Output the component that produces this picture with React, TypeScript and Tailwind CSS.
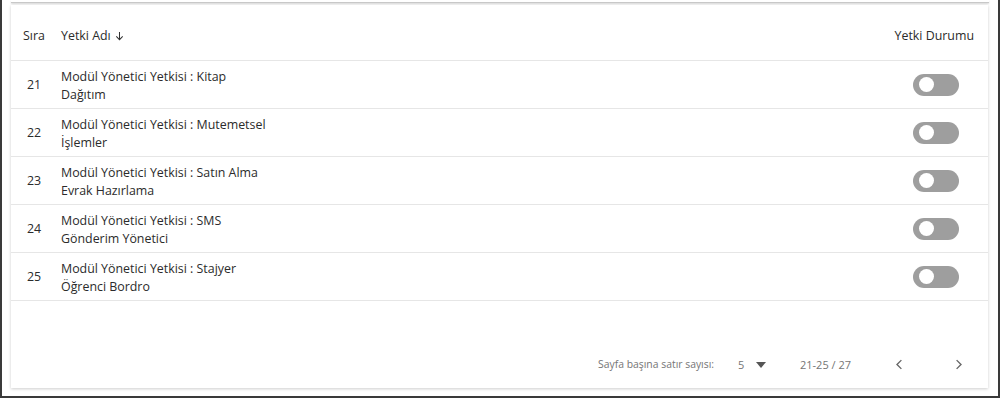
import React from "react";

const rows = [
  { n: 21, a: "Modül Yönetici Yetkisi : Kitap", b: "Dağıtım" },
  { n: 22, a: "Modül Yönetici Yetkisi : Mutemetsel", b: "İşlemler" },
  { n: 23, a: "Modül Yönetici Yetkisi : Satın Alma", b: "Evrak Hazırlama" },
  { n: 24, a: "Modül Yönetici Yetkisi : SMS", b: "Gönderim Yönetici" },
  { n: 25, a: "Modül Yönetici Yetkisi : Stajyer", b: "Öğrenci Bordro" },
];

function Toggle() {
  return (
    <div className="w-[46px] h-[22px] rounded-full bg-[#9e9e9e] flex items-center pl-[6px]">
      <div className="w-[15px] h-[15px] rounded-full bg-white" />
    </div>
  );
}

export default function App() {
  return (
    <div
      className="w-[1000px] h-[398px] bg-white border-l-2 border-r-2 border-b-2 border-[#3a3a3a] overflow-hidden"
      style={{ fontFamily: '"Open Sans", "Noto Sans", sans-serif' }}
    >
      <div className="h-[3px] mx-[9px] border-b border-[#c8c8c8] shadow-[0_1px_2px_rgba(0,0,0,0.15)]" />
      <div className="ml-[9px] mr-[10px] mt-[2px] h-[383px] bg-white shadow-[0_1px_3px_rgba(0,0,0,0.2)] flex flex-col">
        <div className="h-[56px] flex items-end pb-[14px] border-b border-[#e6e6e6] text-[12.4px] text-[#2b2b2b]">
          <div className="w-[50px] pl-[12px]">Sıra</div>
          <div className="flex-1 flex items-center gap-[3px]">
            Yetki Adı
            <svg width="11" height="12" viewBox="0 0 24 24" className="mt-[-2px]">
              <path d="M12 3v17M5 13l7 7 7-7" fill="none" stroke="#333" strokeWidth="2.2" />
            </svg>
          </div>
          <div className="pr-[14px]">Yetki Durumu</div>
        </div>
        {rows.map((r) => (
          <div key={r.n} className="h-[48px] pt-[2px] flex items-center border-b border-[#e6e6e6] text-[12.4px] text-[#2b2b2b]">
            <div className="w-[50px] pl-[16px]">{r.n}</div>
            <div className="flex-1 leading-[18px]">
              <div>{r.a}</div>
              <div>{r.b}</div>
            </div>
            <div className="pr-[29px] mt-[-2px]">
              <Toggle />
            </div>
          </div>
        ))}
        <div className="flex-1 flex items-end pb-[15px] text-[10.4px] text-[#757575]">
          <div className="ml-[587px] flex items-center">
            <span className="w-[140px]">Sayfa başına satır sayısı:</span>
            <span className="w-[18px] text-[11px]">5</span>
            <svg width="10" height="6" viewBox="0 0 10 6">
              <path d="M0 0h10L5 6z" fill="#555" />
            </svg>
            <span className="ml-[34px] w-[92px] text-[11px]">21-25 / 27</span>
            <svg width="15" height="15" viewBox="0 0 24 24">
              <path d="M15 5l-7 7 7 7" fill="none" stroke="#666" strokeWidth="2.2" />
            </svg>
            <svg width="15" height="15" viewBox="0 0 24 24" className="ml-[44px]">
              <path d="M9 5l7 7-7 7" fill="none" stroke="#666" strokeWidth="2.2" />
            </svg>
          </div>
        </div>
      </div>
    </div>
  );
}
